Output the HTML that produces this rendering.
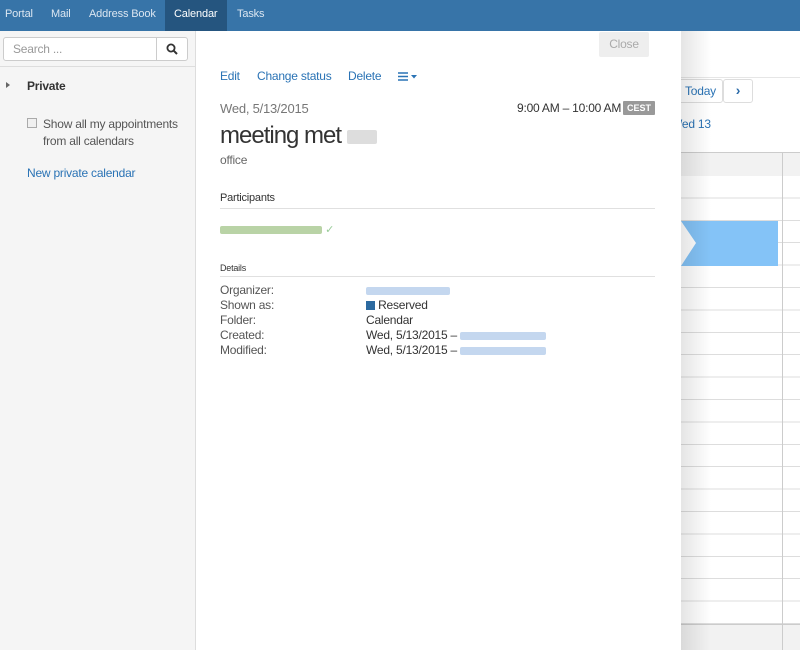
<!DOCTYPE html>
<html><head><meta charset="utf-8"><style>
*{margin:0;padding:0;box-sizing:border-box}
body{width:800px;height:650px;overflow:hidden;font-family:"Liberation Sans",Arial,sans-serif;font-size:12px;letter-spacing:-0.22px;color:#333;background:#fff;position:relative}
.top{position:absolute;left:0;top:0;width:800px;height:31px;background:#3774a8}
.top span{position:absolute;top:8px;color:#dbe6f1;font-size:11px;letter-spacing:-0.15px}
.top .act{background:#25557f;color:#fff;top:0;height:31px;line-height:29px;padding:0 9px}
.side{position:absolute;left:0;top:31px;width:196px;height:619px;background:#f5f5f5;border-right:1px solid #ddd}
.abs{position:absolute}
.blur{display:inline-block;height:8px;border-radius:2px;vertical-align:middle}
</style></head><body>
<div class="top">
<span style="left:5px">Portal</span>
<span style="left:51px">Mail</span>
<span style="left:89px">Address Book</span>
<span class="act" style="left:165px;width:62px">Calendar</span>
<span style="left:237px">Tasks</span>
</div>
<div class="side">
<div class="abs" style="left:3px;top:6px;width:185px;height:24px;border:1px solid #ccc;border-radius:3px;background:#fff"></div>
<div class="abs" style="left:156px;top:6px;width:1px;height:24px;background:#ccc"></div>
<div class="abs" style="left:13px;top:11px;color:#999">Search ...</div>
<svg class="abs" style="left:166px;top:12px" width="12" height="12" viewBox="0 0 12 12"><circle cx="5" cy="5" r="3.6" fill="none" stroke="#333" stroke-width="1.8"/><path d="M7.6 7.6 11 11" stroke="#333" stroke-width="2"/></svg>
<div class="abs" style="left:0;top:35px;width:196px;height:1px;background:#ddd"></div>
<div class="abs" style="left:6px;top:51px;width:0;height:0;border-left:4px solid #666;border-top:3.5px solid transparent;border-bottom:3.5px solid transparent"></div>
<div class="abs" style="left:27px;top:48px;font-weight:bold">Private</div>
<div class="abs" style="left:27px;top:87px;width:10px;height:10px;border:1px solid #aaa;background:#f0f0f0"></div>
<div class="abs" style="left:43px;top:85px;color:#555;line-height:17px">Show all my appointments<br>from all calendars</div>
<div class="abs" style="left:27px;top:135px;color:#2a73b5">New private calendar</div>
</div>
<!-- right calendar -->
<div class="abs" style="left:681px;top:31px;width:119px;height:619px;background:#fff">
<div class="abs" style="left:0;top:46px;width:119px;height:1px;background:#e6e6e6"></div>
<div class="abs" style="left:-20px;top:48px;width:62px;height:24px;border:1px solid #ddd;border-radius:3px"></div>
<div class="abs" style="left:4px;top:53px;color:#2a73b5">Today</div>
<div class="abs" style="left:42px;top:48px;width:30px;height:24px;border:1px solid #ddd;border-radius:3px;text-align:center;line-height:21px;color:#2a6aa8;font-weight:bold;font-size:14px">›</div>
<div class="abs" style="left:-10px;top:86px;color:#2a73b5">Wed 13</div>
<div class="abs" style="left:0;top:121px;width:119px;height:24px;background:#f2f2f2;border-top:1px solid #ccc"></div>
<div class="abs" style="left:0;top:145px;width:119px;height:448px;background:repeating-linear-gradient(#fff 0,#fff 21.4px,#ddd 21.4px,#ddd 22.4px)"></div>
<div class="abs" style="left:0;top:593px;width:119px;height:26px;background:#f2f2f2;border-top:1px solid #ccc"></div>
<div class="abs" style="left:101px;top:121px;width:1px;height:498px;background:#ccc"></div>
<div class="abs" style="left:0;top:190px;width:97px;height:45px;background:#84c3f7"></div>
<div class="abs" style="left:0;top:190px;width:0;height:0;border-left:15px solid #fff;border-top:22px solid transparent;border-bottom:23px solid transparent"></div>
<div class="abs" style="left:0;top:0;width:30px;height:619px;background:linear-gradient(90deg,rgba(0,0,0,.1),rgba(0,0,0,0))"></div>
</div>
<!-- popup -->
<div class="abs" style="left:196px;top:31px;width:485px;height:619px;background:#fff">
<div class="abs" style="left:403px;top:1px;width:50px;height:25px;background:#eee;border-radius:2px;color:#aaa;text-align:center;line-height:24px">Close</div>
<div class="abs" style="left:24px;top:38px;color:#2a73b5">Edit</div>
<div class="abs" style="left:61px;top:38px;color:#2a73b5">Change status</div>
<div class="abs" style="left:152px;top:38px;color:#2a73b5">Delete</div>
<svg class="abs" style="left:202px;top:41px" width="22" height="10"><path d="M0 1h10M0 4.5h10M0 8h10" stroke="#2a73b5" stroke-width="1.6"/><path d="M13 3h6l-3 3.5z" fill="#2a73b5"/></svg>
<div class="abs" style="left:24px;top:70px;color:#777;font-size:13px">Wed, 5/13/2015</div>
<div class="abs" style="left:321px;top:70px;color:#333">9:00 AM – 10:00 AM</div>
<div class="abs" style="left:427px;top:70px;width:32px;height:14px;background:#999;color:#fff;font-size:9px;font-weight:bold;text-align:center;line-height:14px;border-radius:1px;letter-spacing:0">CEST</div>
<div class="abs" style="left:24px;top:91px;font-size:24px;letter-spacing:-1px;color:#333">meeting met <span class="blur" style="width:30px;height:14px;background:#ddd"></span></div>
<div class="abs" style="left:24px;top:122px;color:#666">office</div>
<div class="abs" style="left:24px;top:161px;color:#333;font-size:11px">Participants</div>
<div class="abs" style="left:24px;top:177px;width:435px;height:1px;background:#e0e0e0"></div>
<div class="abs" style="left:24px;top:191px"><span class="blur" style="width:102px;background:#b9d3a6"></span> <span style="color:#9c9;font-size:11px">✓</span></div>
<div class="abs" style="left:24px;top:232px;color:#333;font-size:9px">Details</div>
<div class="abs" style="left:24px;top:245px;width:435px;height:1px;background:#e0e0e0"></div>
<div class="abs" style="left:24px;top:252px;color:#555;line-height:15px">Organizer:<br>Shown as:<br>Folder:<br>Created:<br>Modified:</div>
<div class="abs" style="left:170px;top:252px;color:#333;line-height:15px">
<span class="blur" style="width:84px;background:#c4d7ef"></span><br>
<span style="display:inline-block;width:9px;height:9px;background:#2c6aa0;vertical-align:-1px"></span> Reserved<br>
Calendar<br>
Wed, 5/13/2015 – <span class="blur" style="width:86px;background:#c4d7ef"></span><br>
Wed, 5/13/2015 – <span class="blur" style="width:86px;background:#c4d7ef"></span>
</div>
</div>
</body></html>
